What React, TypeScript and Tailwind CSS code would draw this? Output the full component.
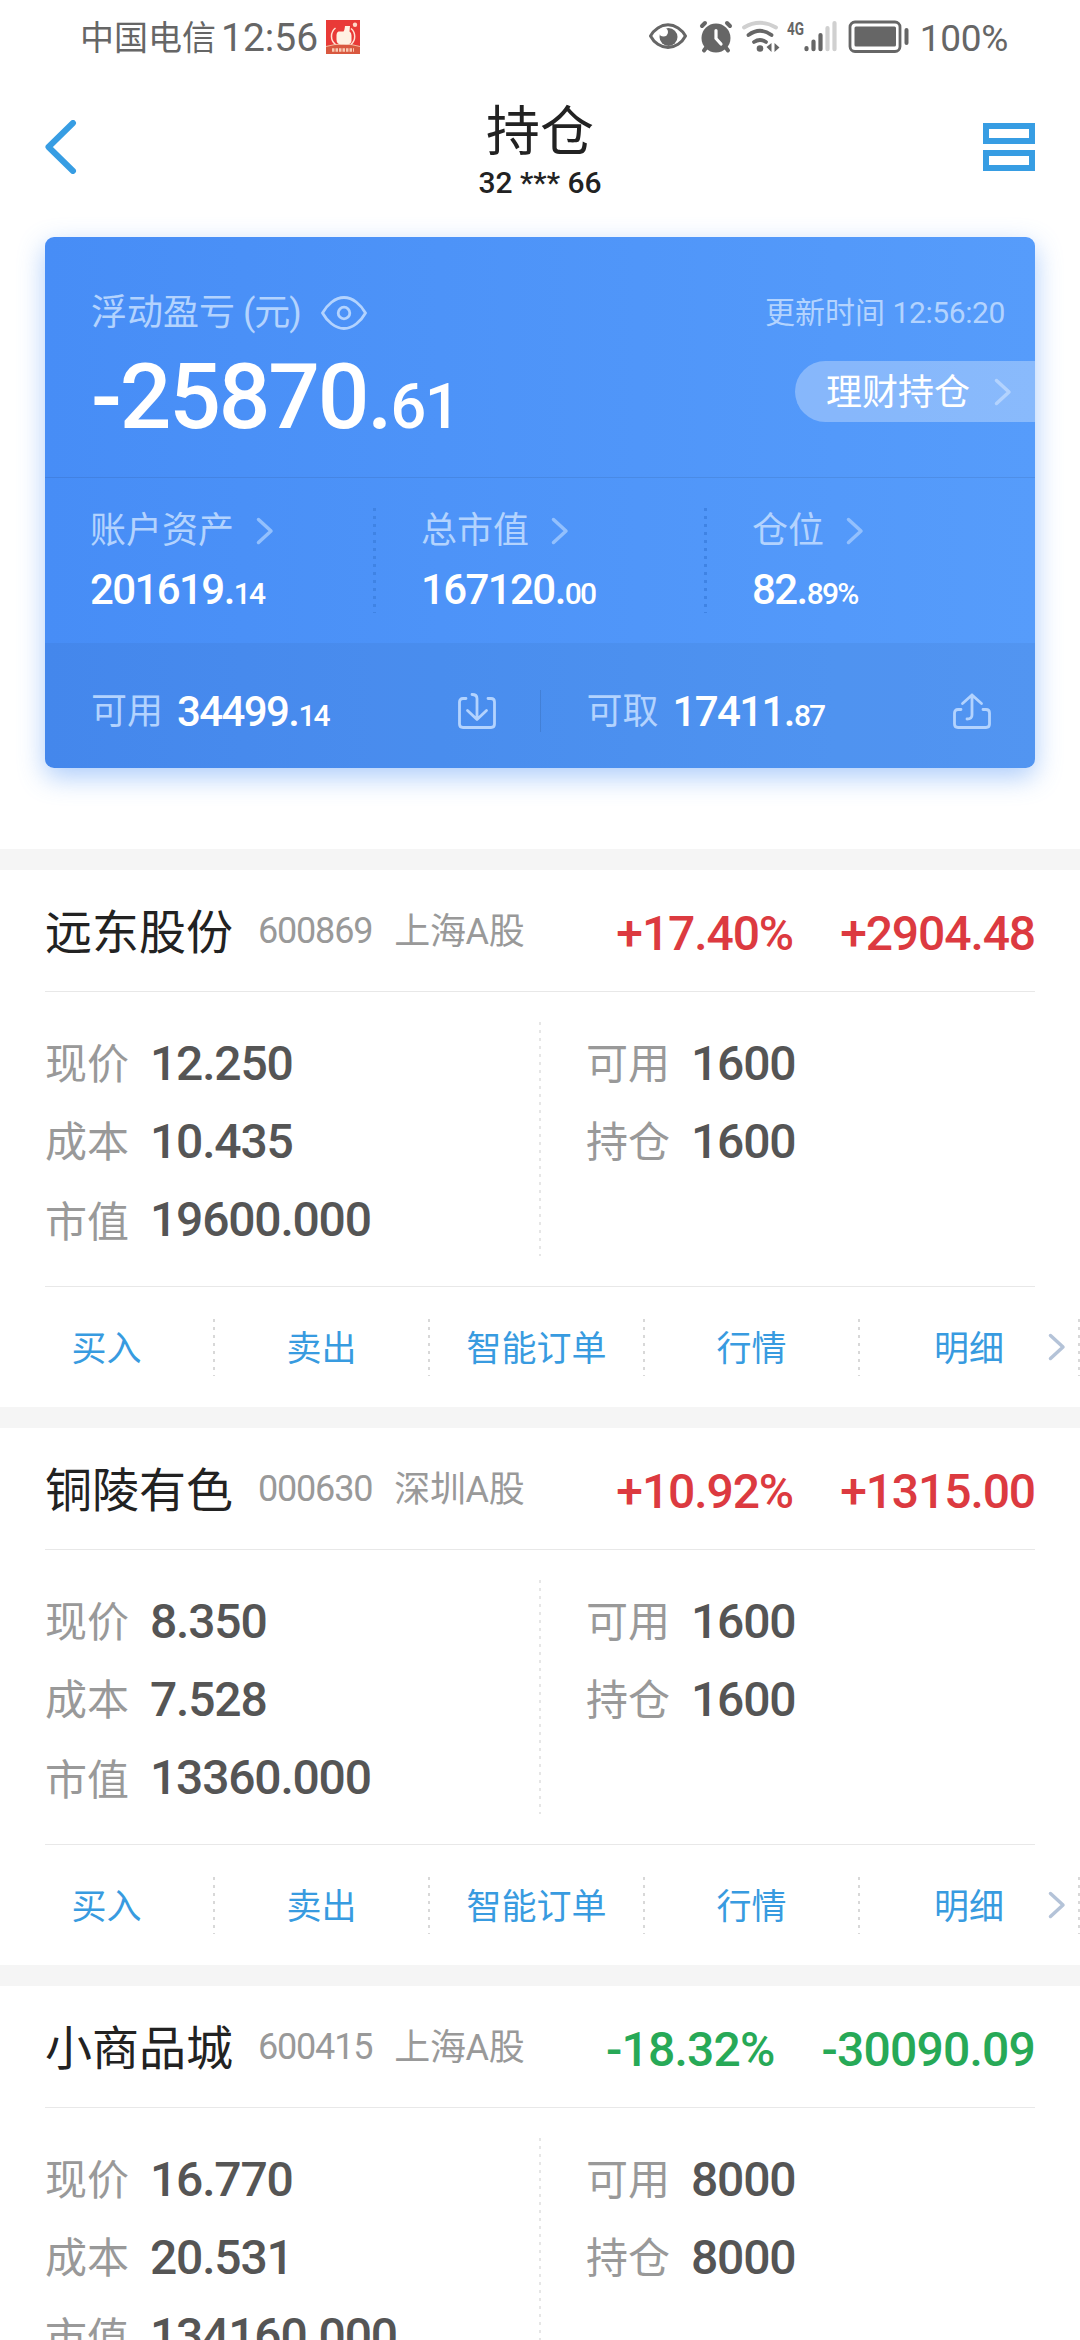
import type { ReactNode } from "react";
import clsx from "clsx";

type Holding = {
  name: string;
  code: string;
  market: string;
  percent: string;
  profit: string;
  price: string;
  cost: string;
  value: string;
  available: string;
  position: string;
};

const HOLDINGS: Holding[] = [
  {
    name: "远东股份", code: "600869", market: "上海A股",
    percent: "+17.40%", profit: "+2904.48",
    price: "12.250", cost: "10.435", value: "19600.000",
    available: "1600", position: "1600",
  },
  {
    name: "铜陵有色", code: "000630", market: "深圳A股",
    percent: "+10.92%", profit: "+1315.00",
    price: "8.350", cost: "7.528", value: "13360.000",
    available: "1600", position: "1600",
  },
  {
    name: "小商品城", code: "600415", market: "上海A股",
    percent: "-18.32%", profit: "-30090.09",
    price: "16.770", cost: "20.531", value: "134160.000",
    available: "8000", position: "8000",
  },
];

const ACTIONS = ["买入", "卖出", "智能订单", "行情", "明细"];

export default function App() {
  return (
    <div className="flex h-[2340px] w-[1080px] flex-col overflow-hidden bg-white font-['Roboto','Noto_Sans_CJK_SC',sans-serif] leading-none whitespace-nowrap text-[#222]">
      <StatusBar />
      <Header />
      <div className="shrink-0 px-[45px] pt-[27px] pb-[81px]">
        <SummaryCard />
      </div>
      {HOLDINGS.map((h) => (
        <HoldingCard key={h.code} holding={h} />
      ))}
    </div>
  );
}

function StatusBar() {
  return (
    <div className="flex h-[74px] shrink-0 items-center justify-between pr-[72px] pl-[80px] text-[#666]">
      <div className="flex items-center">
        <span className="pt-[2px] text-[34px]">中国电信</span>
        <span className="ml-[5px] pt-[3px] text-[39px]">12:56</span>
        <AppBadge />
      </div>
      <div className="flex items-center">
        <StatusIcons />
        <span className="ml-[11px] pt-[2px] text-[37px] tracking-[-0.3px]">100%</span>
      </div>
    </div>
  );
}

function AppBadge() {
  return (
    <svg className="ml-[8px]" width="34" height="34" viewBox="0 0 34 34">
      <rect width="34" height="34" fill="#e93a37" />
      <path d="M0 26q17-5 34 0v8H0z" fill="#d9583f" />
      <path d="M0 26.500q17-5 34 0" fill="none" stroke="#f6b9a0" strokeWidth="1" />
      <path d="M9.500 8a10.500 10.500 0 0 0 0 16.500M25 8.500a10.500 10.500 0 0 1 0 16" fill="none" stroke="#ffe3d4" strokeWidth="1.500" />
      <path d="M12.500 11.500h5q1-1 1.500-5.500h5l-.5 5.500q2 1 2 4v5q0 4-5 4h-5q-5 0-5-5v-4.500q0-3 2-3.500z" fill="#fff1e2" />
      <circle cx="29" cy="4.800" r="2.200" fill="#ffd9c8" />
      <path d="M6 30h22" stroke="#f9c9b2" strokeWidth="3.500" strokeDasharray="2.500 1" />
    </svg>
  );
}

function StatusIcons() {
  return (
    <svg className="overflow-visible" width="261" height="34" viewBox="0 0 261 34">
      {/* eye comfort */}
      <path d="M2.500 16C6 9.500 13 4.800 20 4.800S34 9.500 37.500 16C34 22.800 27 27.500 20 27.500S6 22.800 2.500 16z" fill="none" stroke="#666" strokeWidth="3" strokeLinejoin="round" />
      <circle cx="20.500" cy="17" r="9" fill="#666" />
      <circle cx="15.500" cy="12" r="4.500" fill="#fff" />
      {/* alarm */}
      <circle cx="68" cy="18" r="14.500" fill="#666" />
      <g stroke="#666" strokeWidth="4" strokeLinecap="round">
        <path d="M54 6l3-3M82 6l-3-3M56 30.500l3-4M80 30.500l-3-4" />
      </g>
      <path d="M68 10.500v8l5 5.500" fill="none" stroke="#fff" strokeWidth="3.200" strokeLinecap="round" />
      {/* wifi */}
      <g fill="none" strokeLinecap="round" strokeWidth="3.800">
        <path d="M96 7.500q16-9.500 32 0" stroke="#d0d0d0" />
        <path d="M100.500 15q11.500-8.500 23 0M106 22q6-4 12 0" stroke="#666" />
      </g>
      <circle cx="112" cy="28.500" r="3.300" fill="#666" />
      <path d="M123.500 23v9l-5-5zM126.500 23v9l5-4.500z" fill="#666" />
      {/* mobile signal */}
      <text x="139" y="14.500" fontSize="18" fontWeight="700" fill="#666" textLength="17" lengthAdjust="spacingAndGlyphs">4G</text>
      <g strokeWidth="4.200" strokeLinecap="round">
        <path d="M158.500 28v1.200M165.500 21.500v7.700M172.500 15v14.200" stroke="#666" />
        <path d="M179.500 8v21.200M186.500 3v26.200" stroke="#d0d0d0" />
      </g>
      {/* battery */}
      <rect x="202" y="2" width="50" height="29.500" rx="5" fill="none" stroke="#666" strokeWidth="2.800" />
      <rect x="206.500" y="6.500" width="41.500" height="20" rx="1.500" fill="#666" />
      <path d="M258.500 10v13" stroke="#666" strokeWidth="4" strokeLinecap="round" />
    </svg>
  );
}

function Header() {
  return (
    <div className="flex h-[136px] shrink-0 justify-between px-[45px]">
      <svg className="mt-[46px]" width="32" height="54" viewBox="0 0 32 54">
        <path d="M28 3L3.500 27 28 51" fill="none" stroke="#379de3" strokeWidth="6" strokeLinecap="round" strokeLinejoin="round" />
      </svg>
      <div className="flex flex-col items-center pt-[32px] pl-[20px]">
        <h1 className="text-[54px]">持仓</h1>
        <p className="mt-[8px] text-[30px] font-medium">32 *** 66</p>
      </div>
      <svg className="mt-[49px]" width="52" height="48" viewBox="0 0 52 48" fill="none" stroke="#379de3" strokeWidth="6">
        <rect x="3" y="3" width="46" height="15" />
        <rect x="3" y="30" width="46" height="15" />
      </svg>
    </div>
  );
}

function SummaryCard() {
  return (
    <section className="flex h-[531px] flex-col rounded-[9px] bg-gradient-to-r from-[#478df6] to-[#569cfb] text-white shadow-[0_9px_27px_rgba(71,141,246,0.45)]">
      <div className="flex h-[241px] justify-between border-b border-black/8 pl-[46px]">
        <div className="pt-[58px]">
          <div className="flex items-center text-[36px] text-[#b3d3fe]">
            <span>浮动盈亏</span>
            <span className="ml-[8px] tracking-[-1px]">(元)</span>
            <EyeIcon />
          </div>
          <Amount value="-25870.61" intClass="text-[91px] tracking-[-2.2px]" fracClass="text-[63px] tracking-[-1.5px]" className="mt-[21px]" />
        </div>
        <div className="flex flex-col items-end pt-[61px]">
          <span className="mr-[30px] text-[30px] text-[#b3d3fe]">
            更新时间 <span className="tracking-[-0.4px]">12:56:20</span>
          </span>
          <div className="mt-[33px] flex h-[61px] w-[240px] items-center justify-between rounded-l-full bg-white/30 pr-[23px] pl-[31px]">
            <span className="pt-[3px] text-[36px]">理财持仓</span>
            <Chevron className="text-[#b3d3fe]" />
          </div>
        </div>
      </div>

      <div className="flex h-[165px]">
        <Stat label="账户资产" value="201619.14" />
        <DottedLine className="mt-[30px] h-[105px] w-[3px] text-[#3f83e4]" />
        <Stat label="总市值" value="167120.00" />
        <DottedLine className="mt-[30px] h-[105px] w-[3px] text-[#3f83e4]" />
        <Stat label="仓位" value="82.89%" />
      </div>

      <div className="flex flex-1 items-center rounded-b-[9px] bg-black/4 pt-[10px]">
        <Balance label="可用" value="34499.14">
          <path d="M8 5.500H5q-3.500 0-3.500 3.500v22q0 3.500 3.500 3.500h28q3.500 0 3.500-3.500V9q0-3.500-3.500-3.500h-3" />
          <path d="M14 1.500q5 0 5 4V26M9.500 17.500L19 26.500l9.500-9" />
        </Balance>
        <div className="h-[42px] w-px bg-black/10" />
        <Balance label="可取" value="17411.87">
          <path d="M8 16.500H5q-3.500 0-3.500 3.500v11q0 3.500 3.500 3.500h28q3.500 0 3.500-3.500V20q0-3.500-3.500-3.500h-3" />
          <path d="M14 26q5 0 5-4V2M9.500 10.500L19 2l9.500 8.500" />
        </Balance>
      </div>
    </section>
  );
}

function EyeIcon() {
  return (
    <svg className="ml-[20px]" width="46" height="34" viewBox="0 0 46 34" fill="none" stroke="currentColor" strokeWidth="2.800">
      <path d="M1.500 17C6 9 14 1.500 23 1.500S40 9 44.500 17C40 25 32 32.500 23 32.500S6 25 1.500 17z" strokeLinejoin="round" />
      <circle cx="23" cy="17" r="5.800" />
    </svg>
  );
}

// The integer part and the dot are larger than the decimals.
function Amount({ value, intClass, fracClass, className }: {
  value: string; intClass: string; fracClass: string; className?: string;
}) {
  const dot = value.indexOf(".") + 1;
  return (
    <div className={clsx("flex items-baseline font-medium", className)}>
      <span className={intClass}>{value.slice(0, dot)}</span>
      <span className={fracClass}>{value.slice(dot)}</span>
    </div>
  );
}

function Stat({ label, value }: { label: string; value: string }) {
  return (
    <div className="flex-1 pt-[35px] pl-[45px]">
      <div className="flex items-center gap-[22px]">
        <span className="text-[36px] text-[#b3d3fe]">{label}</span>
        <Chevron className="text-[#93c0fd]" />
      </div>
      <Amount value={value} intClass="text-[42px] tracking-[-1.6px]" fracClass="text-[30px] tracking-[-1.8px]" className="mt-[20px]" />
    </div>
  );
}

function Balance({ label, value, children }: { label: string; value: string; children: ReactNode }) {
  return (
    <div className="flex flex-1 items-center pr-[44px] pl-[46px]">
      <span className="pt-[2px] text-[36px] text-[#b3d3fe]">{label}</span>
      <Amount value={value} intClass="text-[42px] tracking-[-1.6px]" fracClass="text-[30px] tracking-[-2px]" className="ml-[14px] pt-[2px]" />
      <svg className="ml-auto text-[#b3d3fe]" width="38" height="36" viewBox="0 0 38 36" fill="none" stroke="currentColor" strokeWidth="2.800" strokeLinecap="round" strokeLinejoin="round">
        {children}
      </svg>
    </div>
  );
}

function Chevron({ className }: { className?: string }) {
  return (
    <svg className={className} width="18" height="28" viewBox="0 0 18 28" fill="none" stroke="currentColor" strokeWidth="3.500" strokeLinecap="round" strokeLinejoin="round">
      <path d="M2.500 2.500L15 14 2.500 25.500" />
    </svg>
  );
}

function DottedLine({ className }: { className?: string }) {
  return <div className={clsx("shrink-0 bg-[repeating-linear-gradient(to_bottom,currentColor_0_3px,transparent_3px_8px)]", className)} />;
}

function HoldingCard({ holding: h }: { holding: Holding }) {
  const up = h.percent.startsWith("+");
  return (
    <section className="relative h-[558px] shrink-0 border-t-[21px] border-[#f5f5f5]">
      <div className="mx-[45px] flex h-[122px] items-center border-b border-[#e8e8e8]">
        <h2 className="pt-[3px] text-[47px]">{h.name}</h2>
        <span className="ml-[25px] text-[36px] tracking-[-1.2px] text-[#999]">{h.code}</span>
        <span className="ml-[22px] pt-[2px] text-[36px] tracking-[-0.3px] text-[#999]">{h.market}</span>
        <div className={clsx("ml-auto flex gap-[47px] pt-[6px] text-[48px] font-medium", up ? "tracking-[-1.1px] text-[#dc3a40]" : "tracking-[-0.8px] text-[#27a957]")}>
          <span>{h.percent}</span>
          <span>{h.profit}</span>
        </div>
      </div>

      <div className="mx-[45px] flex h-[295px] border-b border-[#e8e8e8]">
        <div className="w-[494px] pt-[33px]">
          <Field label="现价" value={h.price} />
          <Field label="成本" value={h.cost} />
          <Field label="市值" value={h.value} labelClass="pt-[6px]" />
        </div>
        <DottedLine className="mt-[30px] h-[234px] w-[2px] text-[#e6e6e6]" />
        <div className="pt-[33px] pl-[45px]">
          <Field label="可用" value={h.available} />
          <Field label="持仓" value={h.position} />
        </div>
      </div>

      <div className="flex h-[120px] items-center">
        {ACTIONS.map((action) => (
          <div key={action} className="flex w-[215px] shrink-0 items-center last:w-[220px]">
            <button className="flex-1 pt-[4px] text-center text-[35px] text-[#389be0]">{action}</button>
            <DottedLine className="h-[57px] w-[2px] text-[#d8d8d8]" />
          </div>
        ))}
      </div>
      <Chevron className="absolute right-[14px] bottom-[46px] text-[#b4c3d8]" />
    </section>
  );
}

function Field({ label, value, labelClass = "pt-[2px]" }: { label: string; value: string; labelClass?: string }) {
  return (
    <div className="flex h-[78px] items-center">
      <span className={clsx("w-[105px] text-[42px] text-[#999]", labelClass)}>{label}</span>
      <span className="text-[48px] font-medium tracking-[-1.2px] text-[#555]">{value}</span>
    </div>
  );
}
